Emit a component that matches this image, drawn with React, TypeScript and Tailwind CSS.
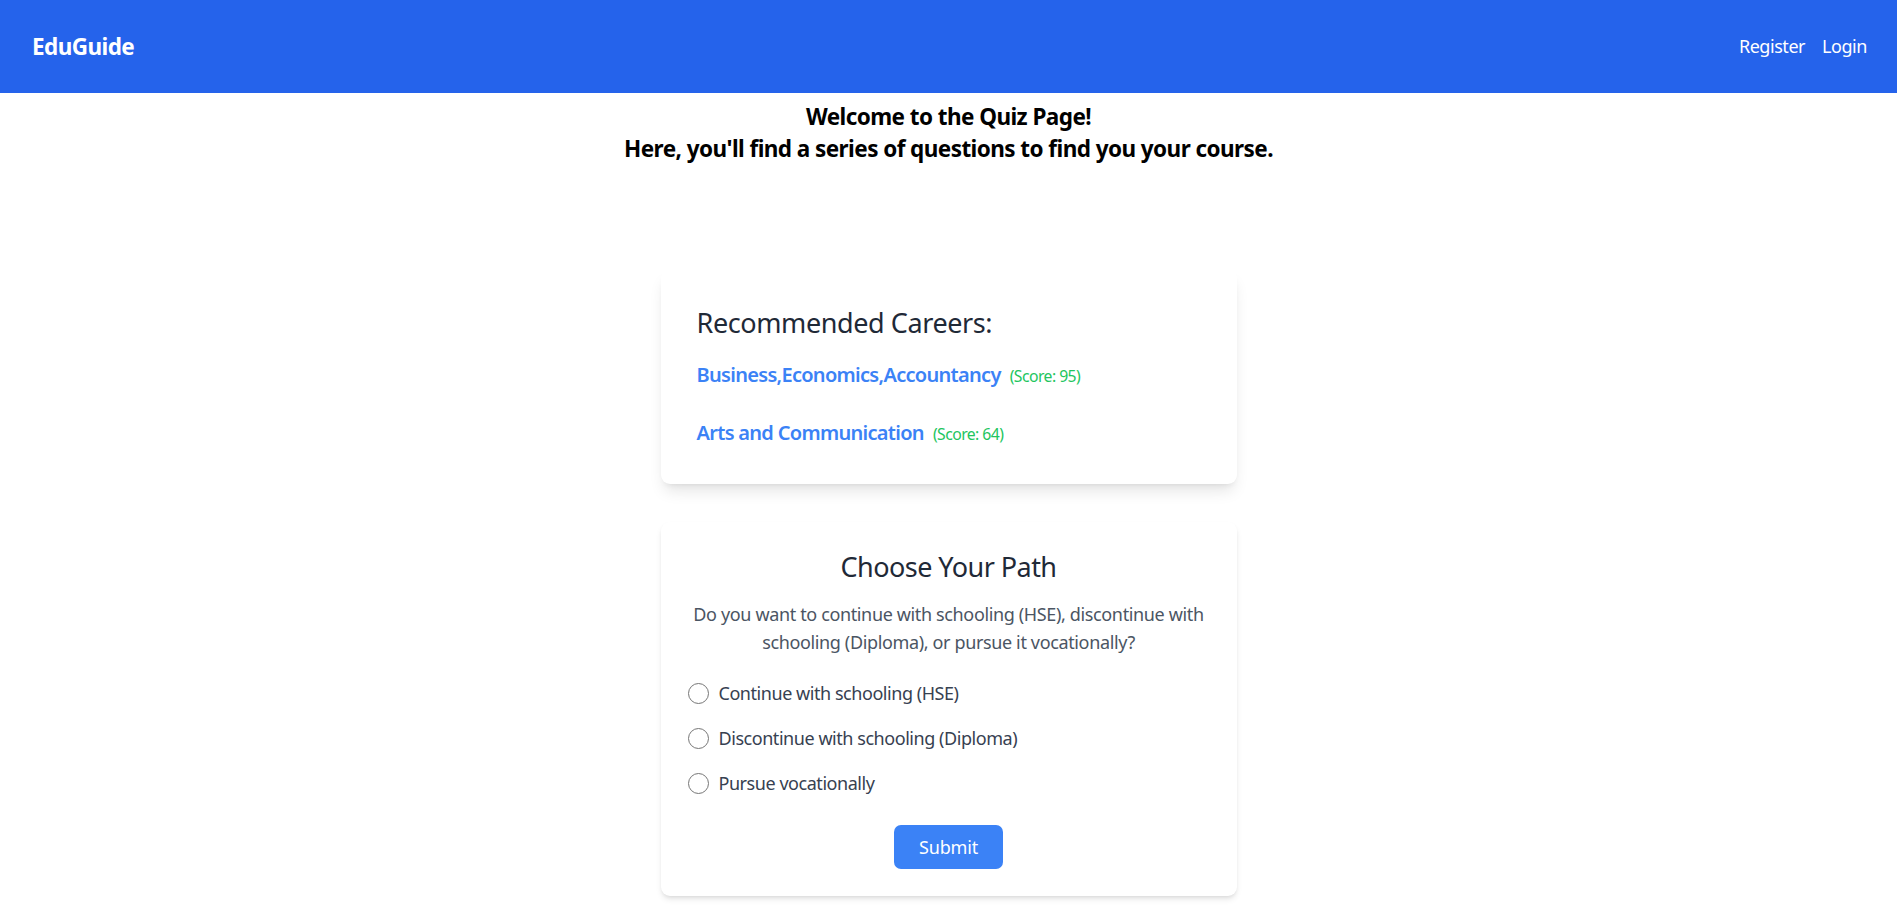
import React from "react";

const font = { fontFamily: '"Noto Sans", "Open Sans", sans-serif' };

function Radio({ label }: { label: string }) {
  return (
    <label className="flex h-[27px] items-center gap-[10px] text-[18px] leading-[27px] tracking-[-0.025em] text-[#374151]">
      <span className="block h-[21px] w-[21px] shrink-0 rounded-full border border-[#767676] bg-white" />
      <span>{label}</span>
    </label>
  );
}

function Career({ name, score }: { name: string; score: number }) {
  return (
    <div className="flex items-baseline gap-[9px]">
      <a href="#" className="text-[20px] font-semibold leading-[31.5px] tracking-[-0.035em] text-[#3b82f6]">
        {name}
      </a>
      <span className="text-[15.75px] tracking-[-0.035em] text-[#22c55e]">(Score: {score})</span>
    </div>
  );
}

export default function App() {
  return (
    <div className="min-h-screen bg-white" style={font}>
      <header className="flex h-[93px] items-center justify-between bg-[#2563eb] pl-[32px] pr-[30px] text-white">
        <div className="text-[22.5px] font-bold leading-[31px] tracking-[-0.025em]">EduGuide</div>
        <nav className="flex items-center gap-[17px] text-[18px] leading-[31px] tracking-[-0.025em]">
          <a href="#">Register</a>
          <a href="#">Login</a>
        </nav>
      </header>

      <div className="mt-[8px] text-center text-[22.5px] font-bold leading-[32px] tracking-[-0.025em] text-black">
        <div>Welcome to the Quiz Page!</div>
        <div>Here, you'll find a series of questions to find you your course.</div>
      </div>

      <main className="mx-auto mt-[105px] flex w-[576px] flex-col gap-[38px]">
        <section className="rounded-[9px] bg-white px-[36px] pb-[36px] pt-[35px] shadow-lg">
          <h2 className="mb-[18px] text-[27px] leading-[36px] tracking-[-0.015em] text-[#1f2937]">
            Recommended Careers:
          </h2>
          <div className="flex flex-col gap-[26px]">
            <Career name="Business,Economics,Accountancy" score={95} />
            <Career name="Arts and Communication" score={64} />
          </div>
        </section>

        <section className="rounded-[9px] bg-white p-[27px] shadow-md">
          <h2 className="text-center text-[27px] leading-[36px] tracking-[-0.02em] text-[#1f2937]">
            Choose Your Path
          </h2>
          <p className="mt-[15px] text-center text-[18px] leading-[28px] tracking-[-0.02em] text-[#4b5563]">
            Do you want to continue with schooling (HSE), discontinue with
            <br />
            schooling (Diploma), or pursue it vocationally?
          </p>
          <div className="mt-[24px] flex flex-col gap-[18px]">
            <Radio label="Continue with schooling (HSE)" />
            <Radio label="Discontinue with schooling (Diploma)" />
            <Radio label="Pursue vocationally" />
          </div>
          <div className="mt-[28px] flex justify-center">
            <button className="h-[44px] rounded-[7px] bg-[#3b82f6] px-[25px] text-[18px] leading-[27px] tracking-[-0.01em] text-white">
              Submit
            </button>
          </div>
        </section>
      </main>
    </div>
  );
}
